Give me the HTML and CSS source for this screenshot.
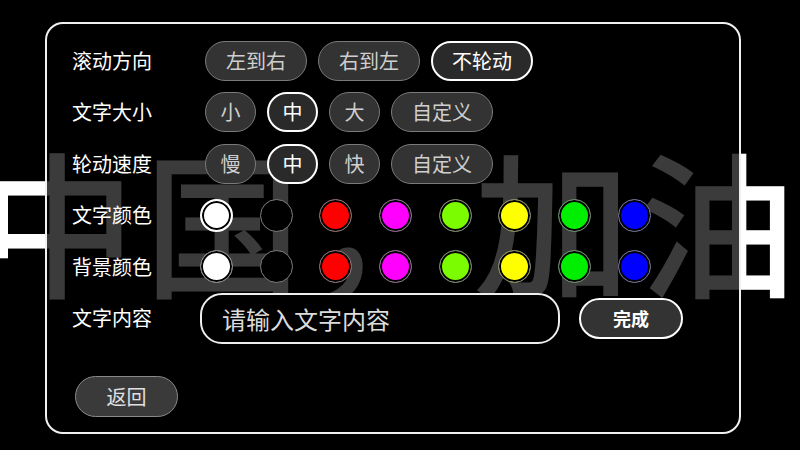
FILE: index.html
```html
<!DOCTYPE html>
<html lang="zh">
<head>
<meta charset="utf-8">
<title>滚动字幕设置</title>
<link rel="stylesheet" href="styles.css">
</head>
<body>
<div class="stage">
  <div class="marquee">中国，加油</div>
  <div class="panel">
    <div class="row">
      <span class="label">滚动方向</span>
      <div class="group">
        <button class="pill">左到右</button>
        <button class="pill">右到左</button>
        <button class="pill on">不轮动</button>
      </div>
    </div>
    <div class="row">
      <span class="label">文字大小</span>
      <div class="group">
        <button class="pill sm">小</button>
        <button class="pill sm on">中</button>
        <button class="pill sm">大</button>
        <button class="pill">自定义</button>
      </div>
    </div>
    <div class="row">
      <span class="label">轮动速度</span>
      <div class="group">
        <button class="pill sm">慢</button>
        <button class="pill sm on">中</button>
        <button class="pill sm">快</button>
        <button class="pill">自定义</button>
      </div>
    </div>
    <div class="row">
      <span class="label">文字颜色</span>
      <div class="dots">
        <span class="dot white on"></span>
        <span class="dot black"></span>
        <span class="dot red"></span>
        <span class="dot magenta"></span>
        <span class="dot lime"></span>
        <span class="dot yellow"></span>
        <span class="dot green"></span>
        <span class="dot blue"></span>
      </div>
    </div>
    <div class="row">
      <span class="label">背景颜色</span>
      <div class="dots">
        <span class="dot white"></span>
        <span class="dot black"></span>
        <span class="dot red"></span>
        <span class="dot magenta"></span>
        <span class="dot lime"></span>
        <span class="dot yellow"></span>
        <span class="dot green"></span>
        <span class="dot blue"></span>
      </div>
    </div>
    <div class="row">
      <span class="label">文字内容</span>
      <div class="input">请输入文字内容</div>
      <button class="done">完成</button>
    </div>
    <div class="footer">
      <button class="back">返回</button>
    </div>
  </div>
</div>
</body>
</html>
```
FILE: styles.css
```css
* { box-sizing: border-box; }
html, body {
  margin: 0;
  padding: 0;
  background: #000;
}
body {
  width: 800px;
  height: 450px;
  overflow: hidden;
  font-family: "Noto Sans CJK SC", "Noto Sans", sans-serif;
  color: #fff;
}
.stage {
  position: relative;
  width: 800px;
  height: 450px;
  overflow: hidden;
}
.marquee {
  position: absolute;
  left: -20px;
  top: 140px;
  font-size: 155px;
  line-height: 1;
  letter-spacing: 10px;
  white-space: nowrap;
  color: #fff;
  -webkit-text-stroke: 3px #fff;
}
.panel {
  position: absolute;
  left: 45px;
  top: 22px;
  width: 696px;
  height: 412px;
  border: 2px solid #f0f0f0;
  border-radius: 18px;
  background: rgba(0, 0, 0, 0.77);
  padding: 11px 0 0 25px;
}
.row {
  display: flex;
  align-items: center;
  height: 51.5px;
}
.label {
  width: 128px;
  flex: none;
  font-size: 20px;
  line-height: 1;
  color: #fff;
}
.group {
  display: flex;
  gap: 11px;
  padding-left: 5px;
}
button {
  font-family: inherit;
  margin: 0;
  padding: 0;
  cursor: pointer;
}
.pill {
  width: 102px;
  height: 40px;
  border-radius: 20px;
  border: 1px solid #7a7a7a;
  background: #333;
  color: #cfcfcf;
  font-size: 20px;
  line-height: 1;
}
.pill.sm { width: 51px; }
.pill.on {
  border: 2px solid #fff;
  background: #2a2a2a;
  color: #fff;
}
.dots {
  display: flex;
  gap: 26.7px;
}
.dot {
  width: 33px;
  height: 33px;
  border-radius: 50%;
  border: 1px solid #808080;
  box-shadow: inset 0 0 0 2px #000;
}
.dot.on {
  border: 2px solid #fff;
}
.white { background: #fff; }
.black { background: #000; }
.red { background: #ff0000; }
.magenta { background: #ff00ff; }
.lime { background: #7cfc00; }
.yellow { background: #ffff00; }
.green { background: #00ee00; }
.blue { background: #0000ff; }
.input {
  width: 360px;
  height: 51px;
  border: 2px solid #eee;
  border-radius: 22px;
  background: #000;
  display: flex;
  align-items: center;
  padding-left: 20px;
  font-size: 24px;
  color: #dcdcdc;
}
.done {
  margin-left: 19px;
  width: 104px;
  height: 41px;
  border-radius: 21px;
  border: 2px solid #fff;
  background: #333;
  color: #fff;
  font-size: 18px;
  font-weight: 700;
}
.footer {
  padding-top: 32px;
  padding-left: 3px;
}
.back {
  width: 103px;
  height: 41px;
  border-radius: 21px;
  border: 1px solid #8a8a8a;
  background: #3a3a3a;
  color: #e0e0e0;
  font-size: 20px;
}
```
